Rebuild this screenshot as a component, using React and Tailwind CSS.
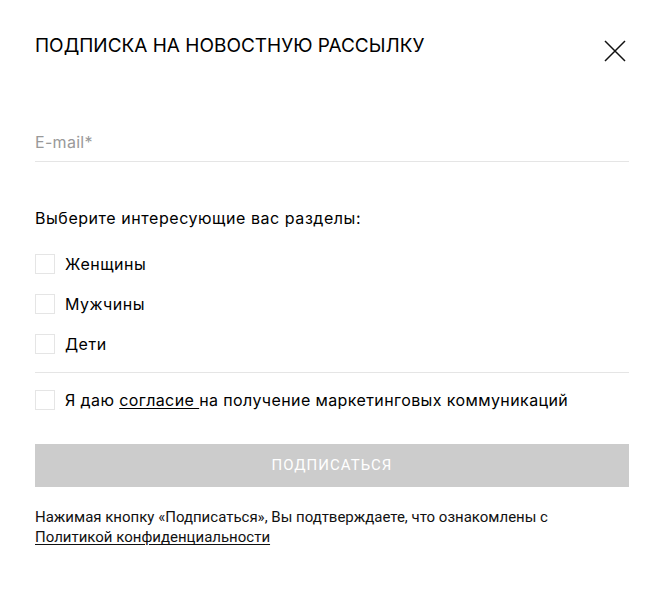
import React from 'react';

const Checkbox = ({ label }) => (
  <label className="flex items-center gap-[10px] cursor-pointer">
    <span className="w-[20px] h-[20px] border border-[#e5e5e5] bg-white shrink-0" />
    <span className="text-[16px] leading-[20px] tracking-[0.5px] text-black">{label}</span>
  </label>
);

export default function App() {
  return (
    <div className="w-[669px] h-[612px] bg-white" style={{ fontFamily: 'Inter, "Liberation Sans", Arial, sans-serif' }}>
      <div className="pl-[35px] pr-[40px] pt-[34px]">
        <div className="flex items-start justify-between">
          <h2 className="text-[19px] leading-[24px] text-black uppercase">
            Подписка на новостную рассылку
          </h2>
          <button className="w-[22px] h-[22px] mt-[6px] mr-[3px]">
            <svg width="22" height="22" viewBox="0 0 22 22" fill="none" stroke="#111" strokeWidth="1.5">
              <path d="M1 1L21 21M21 1L1 21" />
            </svg>
          </button>
        </div>

        <div className="mt-[68px] border-b border-[#e5e5e5] pb-[7px]">
          <input
            type="text"
            placeholder="E-mail*"
            className="w-full text-[16px] leading-[20px] tracking-[0.3px] outline-none placeholder-[#999] text-black"
          />
        </div>

        <p className="mt-[46px] text-[16px] leading-[20px] tracking-[0.55px] text-black">Выберите интересующие вас разделы:</p>

        <div className="mt-[26px] flex flex-col gap-[20px]">
          <Checkbox label="Женщины" />
          <Checkbox label="Мужчины" />
          <Checkbox label="Дети" />
        </div>

        <div className="mt-[18px] border-t border-[#e5e5e5]" />

        <label className="mt-[17px] flex items-center gap-[10px]">
          <span className="w-[20px] h-[20px] border border-[#e5e5e5] shrink-0" />
          <span className="text-[16px] leading-[20px] tracking-[0.4px] text-black">
            Я даю <span className="underline underline-offset-2">согласие </span>на получение маркетинговых коммуникаций
          </span>
        </label>

        <button
          className="mt-[34px] w-full h-[43px] bg-[#cccccc] text-white text-[15px] tracking-[1px] uppercase"
          style={{ fontFamily: 'Roboto, "Liberation Sans", sans-serif' }}
        >
          Подписаться
        </button>

        <p
          className="mt-[20px] text-[15px] leading-[20px] text-[#111]"
          style={{ fontFamily: 'Roboto, "Liberation Sans", sans-serif' }}
        >
          Нажимая кнопку «Подписаться», Вы подтверждаете, что ознакомлены с
          <br />
          <a className="underline underline-offset-2">Политикой конфиденциальности</a>
        </p>
      </div>
    </div>
  );
}
